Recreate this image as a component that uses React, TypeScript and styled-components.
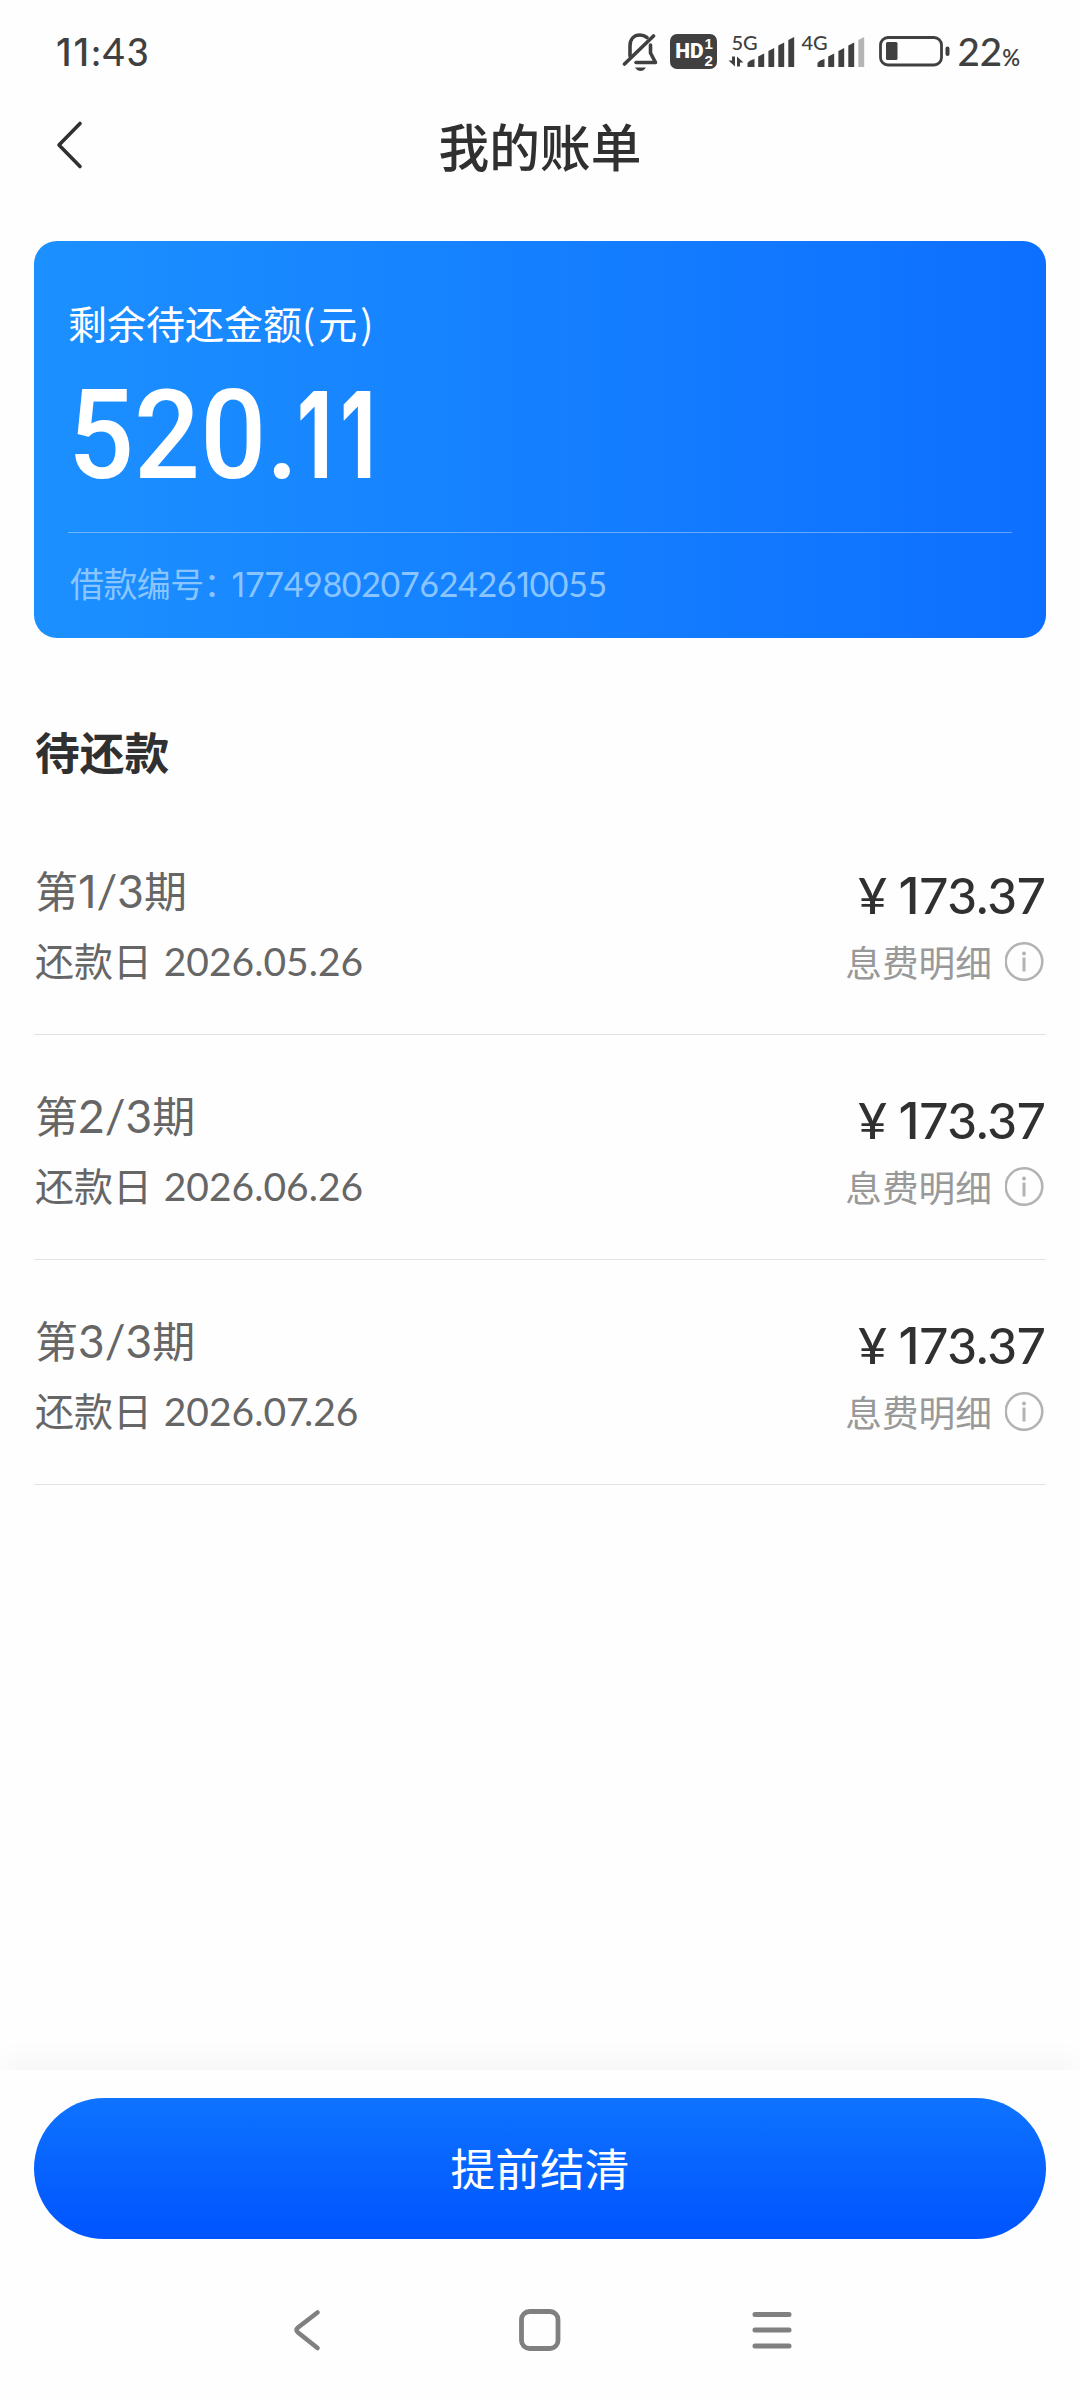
import React from 'react';
import styled, { createGlobalStyle } from 'styled-components';

const CJK = '"Noto Sans CJK SC", sans-serif';

const GlobalStyle = createGlobalStyle`
  * { box-sizing: border-box; }
  body { margin: 0; background: #fefefe; }
`;

const Screen = styled.div`
  width: 1080px;
  height: 2400px;
  display: flex;
  flex-direction: column;
  overflow: hidden;
  background: #fefefe;
  font-family: ${CJK};
  white-space: nowrap;
`;

/* ---------- numerals ---------- */
const Figures = styled.span<{ $size: number; $track?: number; $weight?: number }>`
  font-family: Lato, ${CJK};
  font-size: ${(p) => p.$size}px;
  font-weight: ${(p) => p.$weight ?? 400};
  letter-spacing: ${(p) => p.$track ?? 0}px;
  line-height: 0;
`;
const One = styled.span`
  font-family: Inter, sans-serif;
  font-size: 0.99em;
`;
const KernedSeven = styled.span`
  letter-spacing: -0.12em;
`;

type NumProps = { text: string; size: number; track?: number; weight?: number };
const Num = ({ text, size, track, weight }: NumProps) => (
  <Figures $size={size} $track={track} $weight={weight}>
    {text.split(/(1|7(?=\.))/).map((part, i) => {
      if (part === '1') return <One key={i}>1</One>;
      if (part === '7' && text[text.indexOf('7') + 1] === '.') return <KernedSeven key={i}>7</KernedSeven>;
      return part;
    })}
  </Figures>
);

/* ---------- status bar ---------- */
const StatusBar = styled.div`
  height: 100px;
  padding: 32px 60px 28px 56px;
  display: flex;
  justify-content: space-between;
  color: #404040;
`;
const Clock = styled.div`
  font-size: 38px;
  line-height: 36px;
`;
const StatusIcons = styled.div`
  display: flex;
  align-items: flex-start;
`;
const HdBadge = styled.div`
  width: 47px;
  height: 35px;
  margin: 2px 11px 0 12px;
  border-radius: 7px;
  background: #404040;
  color: #fff;
  display: flex;
  align-items: center;
  justify-content: center;
  font: 900 21px/35px Roboto, sans-serif;
`;
const SimPair = styled.div`
  display: flex;
  flex-direction: column;
  margin-left: 1px;
  font: 700 15px/17px "Liberation Sans", sans-serif;
`;
const Signal = styled.div<{ $w: number }>`
  width: ${(p) => p.$w}px;
  height: 36px;
  display: flex;
  flex-direction: column;
`;
const NetLabel = styled.div<{ $x: number }>`
  height: 0;
  padding-left: ${(p) => p.$x}px;
  font: 500 20px/20px Lato, sans-serif;
`;
const BatteryText = styled.div`
  margin-left: 6px;
  line-height: 36px;
  font-size: 38px;
`;

const MutedBell = () => (
  <svg width="36" height="40" viewBox="0 0 36 40" fill="none" stroke="#404040" strokeWidth="3.6" strokeLinecap="round" strokeLinejoin="round">
    <path d="M8 24V14C8 7 12 3 18 3C21 3 23 4 25 5.500" />
    <path d="M28.500 13V21L33.500 30.500H14" />
    <path d="M31.500 4L2.500 32" />
    <path d="M13 35.500H24C22.500 38 20.500 39 18.500 39S14.500 38 13 35.500Z" fill="#404040" stroke="none" />
  </svg>
);

const SignalBars = ({ x, arrows, faded }: { x: number; arrows?: boolean; faded?: boolean }) => (
  <svg width={x + 49} height="36" viewBox={`0 0 ${x + 49} 36`} fill="#404040">
    {arrows && <path d="M4 24.500H7V34.500L.5 28.500H4ZM9 34.500V24.500L15.500 30.500H12V34.500Z" />}
    <path d={`M${x} 35V31Q${x + 2} 28 ${x + 7} 27V35Z`} />
    <path d={`M${x + 10.7} 35V24.500L${x + 16.7} 21.500V35Z`} />
    <path d={`M${x + 20.9} 35V19L${x + 26.7} 16V35Z`} />
    <path d={`M${x + 30.8} 35V13.500L${x + 36.7} 10.500V35Z`} />
    <path d={`M${x + 40.8} 35V8L${x + 46.7} 5V35Z`} fill={faded ? '#b5b5b5' : '#404040'} />
  </svg>
);

const Battery = () => (
  <svg width="72" height="36" viewBox="0 0 72 36" fill="#404040">
    <rect x="1.500" y="5.500" width="61" height="27.500" rx="7.500" fill="none" stroke="#404040" strokeWidth="2.800" />
    <rect x="7" y="10" width="11.500" height="18" rx="1.500" />
    <rect x="66.500" y="14.500" width="4" height="9.500" rx="2" />
  </svg>
);

/* ---------- header ---------- */
const TitleBar = styled.header`
  height: 94px;
  padding: 0 54px 4px;
  display: grid;
  grid-template-columns: 60px 1fr 60px;
  align-items: center;
`;
const Title = styled.h1`
  margin: 0;
  text-align: center;
  font-size: 50.7px;
  line-height: 88px;
  font-weight: 500;
  color: #303030;
`;

/* ---------- balance card ---------- */
const Content = styled.main`
  flex: 1;
  padding: 47px 34px 0;
`;
const Card = styled.section`
  height: 397px;
  padding: 59px 34px 0;
  border-radius: 23px;
  background: linear-gradient(90deg, #1c90ff, #0d6fff);
  color: #fff;
`;
const CardLabel = styled.div`
  font-size: 39px;
  line-height: 44px;
`;
const Unit = styled.span`
  letter-spacing: 3px;
`;
const Balance = styled.div`
  margin: 37px 0 41px;
  font: 500 125px/110px Roboto, sans-serif;
  transform: scaleX(0.93);
  transform-origin: left;
`;
const BalanceOnes = styled.span`
  display: inline-block;
  margin-left: -2px;
  font: 700 120px/0 Inter, sans-serif;
  letter-spacing: 11px;
  transform: scaleX(0.74);
  transform-origin: left;
`;
const LoanNo = styled.div`
  padding: 30px 0 0 2px;
  border-top: 1px solid rgba(255, 255, 255, 0.36);
  font-size: 34px;
  line-height: 40px;
  color: #8ac5ff;
`;
const LoanLabel = styled.span`
  letter-spacing: -0.6px;
`;
const Colon = styled.span`
  letter-spacing: -6px;
`;

/* ---------- instalments ---------- */
const SectionTitle = styled.h2`
  margin: 83px 0 29px 1px;
  font-size: 44.7px;
  line-height: 60px;
  font-weight: 700;
  color: #303030;
`;
const Row = styled.div`
  height: 225px;
  display: flex;
  justify-content: space-between;
  border-bottom: 1px solid #e2e2e2;
`;
const RowLeft = styled.div`
  padding: 54px 0 0 1px;
  color: #666;
`;
const Period = styled.div`
  height: 50px;
  font-size: 43px;
  line-height: 50px;
`;
const DueDate = styled.div`
  height: 46px;
  margin-top: 22px;
  font-size: 39px;
  line-height: 46px;
  word-spacing: 3px;
`;
const RowRight = styled.div`
  padding: 52px 1px 0 0;
  display: flex;
  flex-direction: column;
  align-items: flex-end;
`;
const Amount = styled.div`
  height: 60px;
  font-size: 51px;
  line-height: 60px;
  color: #303030;
`;
const Detail = styled.div`
  height: 40px;
  margin-top: 19px;
  display: flex;
  align-items: center;
  gap: 13px;
  font-size: 36.7px;
  line-height: 40px;
  color: #999;
`;

const InfoIcon = () => (
  <svg width="40" height="40" viewBox="0 0 40 40" fill="none" stroke="#b3b3b3" strokeWidth="2.600">
    <circle cx="19" cy="20.500" r="18.300" />
    <path d="M19 16.500V30.500" strokeWidth="3" />
    <circle cx="19" cy="12.500" r="2" fill="#b3b3b3" stroke="none" />
  </svg>
);

/* ---------- footer ---------- */
const Footer = styled.footer`
  height: 190px;
  padding: 28px 34px 0;
  background: #fefefe;
  box-shadow: 0 -6px 30px rgba(0, 0, 0, 0.045);
`;
const SettleButton = styled.button`
  display: block;
  width: 100%;
  height: 141px;
  padding: 0 0 3px;
  border: 0;
  border-radius: 71px;
  background: linear-gradient(180deg, #0e73ff, #0054ff);
  color: #fff;
  font: 400 44.7px/60px ${CJK};
`;
const NavBar = styled.nav`
  position: relative;
  height: 140px;
  background: #fefefe;
  display: flex;
  justify-content: center;
`;
const NavKey = styled.div`
  width: 232px;
  display: flex;
  align-items: center;
  justify-content: center;
`;

const instalments = [
  { no: 1, date: '2026.05.26' },
  { no: 2, date: '2026.06.26' },
  { no: 3, date: '2026.07.26' },
];

export default function App() {
  return (
    <Screen>
      <GlobalStyle />
      <StatusBar>
        <Clock><Num text="11:43" size={38} weight={500} track={2} /></Clock>
        <StatusIcons>
          <MutedBell />
          <HdBadge>
            HD
            <SimPair><span>1</span><span>2</span></SimPair>
          </HdBadge>
          <Signal $w={71}>
            <NetLabel $x={3}>5G</NetLabel>
            <SignalBars x={19.5} arrows />
          </Signal>
          <Signal $w={80}>
            <NetLabel $x={2}>4G</NetLabel>
            <SignalBars x={18.5} faded />
          </Signal>
          <Battery />
          <BatteryText>
            <Num text="22" size={38.5} weight={500} />
            <Num text="%" size={22} weight={600} />
          </BatteryText>
        </StatusIcons>
      </StatusBar>
      <TitleBar>
        <svg width="32" height="52" viewBox="0 0 32 52" fill="none" stroke="#303030" strokeWidth="3.600" strokeLinecap="round" strokeLinejoin="round">
          <path d="M26 4.500L5 26L26 47.500" />
        </svg>
        <Title>我的账单</Title>
      </TitleBar>
      <Content>
        <Card>
          <CardLabel>剩余待还金额<Unit>(元)</Unit></CardLabel>
          <Balance>520.<BalanceOnes>11</BalanceOnes></Balance>
          <LoanNo>
            <LoanLabel>借款编号</LoanLabel><Colon>：</Colon>
            <Num text="17749802076242610055" size={34} track={-0.35} />
          </LoanNo>
        </Card>
        <SectionTitle>待还款</SectionTitle>
        {instalments.map((it) => (
          <Row key={it.no}>
            <RowLeft>
              <Period>第<Num text={`${it.no}/3`} size={46} />期</Period>
              <DueDate>还款日 <Num text={it.date} size={39} /></DueDate>
            </RowLeft>
            <RowRight>
              <Amount><Num text="¥ 173.37" size={51} track={-0.8} weight={500} /></Amount>
              <Detail>息费明细<InfoIcon /></Detail>
            </RowRight>
          </Row>
        ))}
      </Content>
      <Footer>
        <SettleButton>提前结清</SettleButton>
      </Footer>
      <NavBar>
        <NavKey>
          <svg width="30" height="46" viewBox="0 0 30 46" fill="none" stroke="#808080" strokeWidth="4.600" strokeLinecap="round" strokeLinejoin="round">
            <path d="M24.500 5.500L5 20.500Q2 23 5 25.500L24.500 41" />
          </svg>
        </NavKey>
        <NavKey>
          <svg width="44" height="46" viewBox="0 0 44 46" fill="none" stroke="#808080" strokeWidth="4.800">
            <rect x="3.500" y="4.500" width="36.500" height="37" rx="8" />
          </svg>
        </NavKey>
        <NavKey>
          <svg width="42" height="46" viewBox="0 0 42 46" stroke="#808080" strokeWidth="5" strokeLinecap="round">
            <path d="M4 7.500H38M4 23H38M4 39H38" />
          </svg>
        </NavKey>
      </NavBar>
    </Screen>
  );
}
